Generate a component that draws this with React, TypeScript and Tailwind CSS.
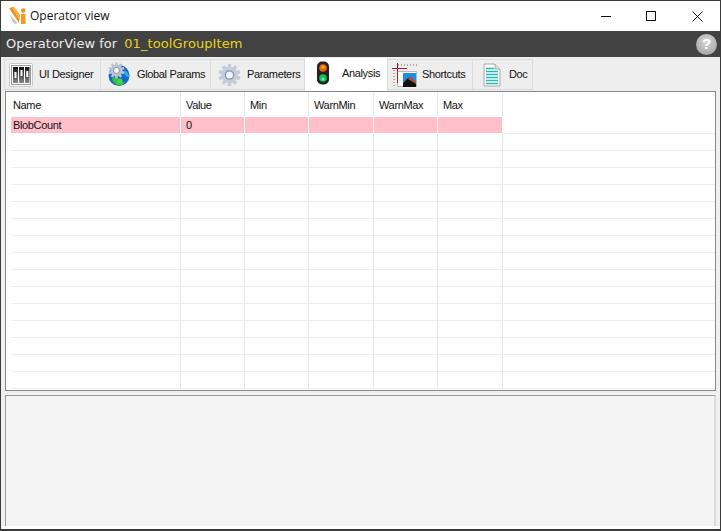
import React from "react";

const cols = [
  { name: "Name", w: "w-[170px]", pl: "pl-[2px]" },
  { name: "Value", w: "w-[64px]", pl: "pl-[5px]" },
  { name: "Min", w: "w-[64px]", pl: "pl-[5px]" },
  { name: "WarnMin", w: "w-[65px]", pl: "pl-[5px]" },
  { name: "WarnMax", w: "w-[64px]", pl: "pl-[5px]" },
  { name: "Max", w: "w-[65px]", pl: "pl-[5px]" },
];

function Logo() {
  return (
    <svg width="18" height="18" viewBox="0 0 18 18">
      <path d="M0 1 L5 0 L11 8 L10 16 Z" fill="#ee8f17" />
      <path d="M3 1 L6 1 L10.5 8 L9.8 12 Z" fill="#f9b44a" />
      <path d="M0 7 L8.5 16 L5 17 Z" fill="#c4c4c4" />
      <rect x="12" y="7" width="4.5" height="10" fill="#ef9a25" />
      <circle cx="14.2" cy="3.6" r="2.3" fill="#ef9a25" />
    </svg>
  );
}

function SlidersIcon() {
  return (
    <svg width="24" height="24" viewBox="0 0 24 24">
      <defs>
        <linearGradient id="sl" x1="0" y1="0" x2="0" y2="1">
          <stop offset="0" stopColor="#111" />
          <stop offset="1" stopColor="#888" />
        </linearGradient>
      </defs>
      <rect x="0.5" y="0.5" width="23" height="23" rx="1" fill="#fff" stroke="#c8c8c8" />
      <rect x="2.5" y="2.5" width="19" height="19" fill="none" stroke="#333" strokeDasharray="1 1" />
      <rect x="4" y="4" width="5" height="16" fill="url(#sl)" />
      <rect x="10" y="4" width="5" height="16" fill="url(#sl)" />
      <rect x="16" y="4" width="4.5" height="16" fill="url(#sl)" />
      <rect x="5.5" y="9" width="2" height="6" fill="#fff" />
      <rect x="11.5" y="7" width="2" height="6" fill="#fff" />
      <rect x="17.3" y="8" width="2" height="6" fill="#fff" />
    </svg>
  );
}

function GearShape({ cx, cy, r, fill }: { cx: number; cy: number; r: number; fill: string }) {
  const teeth = Array.from({ length: 10 }, (_, i) => i * 36);
  return (
    <g>
      {teeth.map((a) => (
        <rect
          key={a}
          x={cx - r * 0.16}
          y={cy - r}
          width={r * 0.32}
          height={r * 0.4}
          rx={r * 0.05}
          fill={fill}
          transform={`rotate(${a} ${cx} ${cy})`}
        />
      ))}
      <circle cx={cx} cy={cy} r={r * 0.75} fill={fill} />
      <circle cx={cx} cy={cy} r={r * 0.38} fill="none" stroke="#8896ad" strokeWidth={r * 0.12} />
      <circle cx={cx} cy={cy} r={r * 0.3} fill="#f1f3f7" />
    </g>
  );
}

function GlobeIcon() {
  return (
    <svg width="23" height="25" viewBox="0 0 23 25">
      <circle cx="12" cy="13.5" r="10.5" fill="#1569c7" />
      <path d="M5 17 C8 14 11 16 13 18 C15 19 17 20 17 22 C13 25 7 23 5 17 Z" fill="#37c23a" />
      <path d="M16 9 C19 8 22 11 22 15 C19 15 17 13 16 9 Z" fill="#2fa7e8" />
      <circle cx="13" cy="19" r="2.5" fill="#44d84a" />
      <GearShape cx={9.5} cy={8.5} r={8} fill="#bcc4d2" />
    </svg>
  );
}

function GearIcon() {
  return (
    <svg width="23" height="24" viewBox="0 0 23 24">
      <GearShape cx={11.5} cy={12} r={11} fill="#c4ccd9" />
    </svg>
  );
}

function LightIcon() {
  return (
    <svg width="14" height="24" viewBox="0 0 14 24">
      <rect x="1" y="0.5" width="12" height="23" rx="5" fill="#222" />
      <circle cx="7" cy="7" r="3.8" fill="#e8690b" />
      <circle cx="7" cy="6" r="1.6" fill="#fbb03b" />
      <circle cx="7" cy="17" r="3.8" fill="#0fc25a" />
      <circle cx="7" cy="18" r="1.6" fill="#58f29a" />
    </svg>
  );
}

function ShortcutsIcon() {
  return (
    <svg width="25" height="24" viewBox="0 0 25 24">
      <path d="M6 2 H25" stroke="#b0a9a0" strokeWidth="2" strokeDasharray="1 2" />
      <path d="M2 7 V24" stroke="#b0a9a0" strokeWidth="2" strokeDasharray="1 2" />
      <rect x="5.5" y="8.5" width="19" height="15" fill="#fff" stroke="#bbb" />
      <rect x="11" y="10" width="13" height="14" fill="#1d8fe0" />
      <path d="M11 20 L17 14 L24 20 V24 H11 Z" fill="#111" />
      <path d="M15 15.5 L18 13.5 L24 19 V21 Z" fill="#b5492a" />
      <path d="M0 5.5 H15" stroke="#c8141c" />
      <path d="M5.5 0 V20" stroke="#c8141c" />
    </svg>
  );
}

function DocIcon() {
  return (
    <svg width="18" height="24" viewBox="0 0 18 24">
      <path d="M1 1 H12 L17 6 V23 H1 Z" fill="#fdfdfd" stroke="#a8a8a8" />
      <path d="M12 1 V6 H17" fill="#e0e0e0" stroke="#a8a8a8" />
      <path d="M3 5.5 H11 M3 8.5 H15 M3 11.5 H15 M3 14.5 H15 M3 17.5 H15 M3 20.5 H15" stroke="#22bcb4" strokeWidth="1.4" />
    </svg>
  );
}

function Tab({
  w,
  icon,
  label,
  gap,
  active,
  pl,
}: {
  w: string;
  icon: React.ReactNode;
  label: string;
  gap: string;
  pl: string;
  active?: boolean;
}) {
  return (
    <div
      className={
        active
          ? `${w} ${pl} ${gap} h-[33px] -mt-[1px] bg-white flex items-center pb-[3px] border-r border-[#dcdcdc]`
          : `${w} ${pl} ${gap} h-[31px] bg-[#eeeeee] flex items-center border border-l-0 border-[#dcdcdc]`
      }
    >
      <span className="flex shrink-0">{icon}</span>
      <span className="text-[11px] tracking-[-0.35px] text-[#111] leading-none whitespace-nowrap">{label}</span>
    </div>
  );
}

export default function App() {
  return (
    <div
      className="w-[721px] h-[531px] flex flex-col bg-[#f0f0f0] border-t border-x border-b-2 border-[#3a3a3a] overflow-hidden"
      style={{ fontFamily: '"Liberation Sans", Arial, sans-serif' }}
    >
      <div className="h-[30px] shrink-0 bg-white flex items-center pl-[8px]">
        <Logo />
        <span className="ml-[3px] text-[12px] text-[#111]" style={{ fontFamily: '"Open Sans", sans-serif' }}>
          Operator view
        </span>
        <div className="ml-auto flex items-center">
          <svg width="10" height="10" viewBox="0 0 10 10" className="mr-[35px]">
            <path d="M0 5.5 H10" stroke="#111" />
          </svg>
          <svg width="10" height="10" viewBox="0 0 10 10" className="mr-[36px]">
            <rect x="0.5" y="0.5" width="9" height="9" fill="none" stroke="#111" />
          </svg>
          <svg width="11" height="11" viewBox="0 0 11 11" className="mr-[17px]">
            <path d="M0.5 0.5 L10.5 10.5 M10.5 0.5 L0.5 10.5" stroke="#111" />
          </svg>
        </div>
      </div>

      <div className="h-[26px] shrink-0 bg-[#424242] flex items-center pl-[5px] pr-[3px] text-[13px] whitespace-pre" style={{ fontFamily: '"DejaVu Sans", sans-serif' }}>
        <span className="text-[#ececec]">OperatorView for </span>
        <span className="text-[#e8d21a] ml-[3px] tracking-[0.1px]">01_toolGroupItem</span>
        <span className="ml-auto w-[21px] h-[21px] rounded-full bg-[radial-gradient(circle_at_50%_35%,#d8d8d8,#9a9a9a)] flex items-center justify-center text-white font-bold text-[15px]" style={{ fontFamily: '"Liberation Sans", sans-serif' }}>
          ?
        </span>
      </div>

      <div className="h-[34px] shrink-0 flex items-start pl-[3px] pt-[2px] bg-[#eeeeee]">
        <div className="flex items-start border-l border-[#dcdcdc]">
          <Tab w="w-[96px]" pl="pl-[4px]" gap="gap-[6px]" icon={<SlidersIcon />} label="UI Designer" />
          <Tab w="w-[110px]" pl="pl-[6px]" gap="gap-[7px]" icon={<GlobeIcon />} label="Global Params" />
          <Tab w="w-[94px]" pl="pl-[7px]" gap="gap-[6px]" icon={<GearIcon />} label="Parameters" />
          <Tab w="w-[83px]" pl="pl-[11px]" gap="gap-[12px]" active icon={<LightIcon />} label="Analysis" />
          <Tab w="w-[85px]" pl="pl-[4px]" gap="gap-[5px]" icon={<ShortcutsIcon />} label="Shortcuts" />
          <Tab w="w-[60px]" pl="pl-[10px]" gap="gap-[8px]" icon={<DocIcon />} label="Doc" />
        </div>
      </div>

      <div className="mx-[4px] h-[300px] shrink-0 border border-[#84878c] bg-white overflow-hidden">
        <div className="ml-[5px]">
          <div className="flex h-[25px]">
            {cols.map((c) => (
              <div key={c.name} className={`${c.w} ${c.pl} pt-[1px] shrink-0 border-r border-[#e8e8e8] flex items-center text-[11px] tracking-[-0.35px] text-[#111]`}>
                {c.name}
              </div>
            ))}
          </div>
          <div className="flex h-[17px]">
            {cols.map((c, i) => (
              <div key={c.name} className={`${c.w} ${c.pl} pt-[1px] shrink-0 h-[16px] bg-[#ffc0cb] border-r border-white flex items-center text-[11px] tracking-[-0.35px] text-[#111]`}>
                {i === 0 ? "BlobCount" : i === 1 ? "0" : ""}
              </div>
            ))}
            <div className="flex-1 border-b border-[#eeeeee]" />
          </div>
          {Array.from({ length: 15 }, (_, r) => (
            <div key={r} className="flex h-[17px] border-b border-[#eeeeee] w-full">
              {cols.map((c) => (
                <div key={c.name} className={`${c.w} shrink-0 border-r border-[#e8e8e8]`} />
              ))}
            </div>
          ))}
        </div>
      </div>

      <div className="mx-[4px] mt-[4px] h-[131px] shrink-0 bg-[#f4f4f4] border-t border-l border-r-2 border-[#9a9a9a] border-r-[#dcdcdc]" />
      <div className="flex-1 mx-[1px] bg-white" />
    </div>
  );
}
